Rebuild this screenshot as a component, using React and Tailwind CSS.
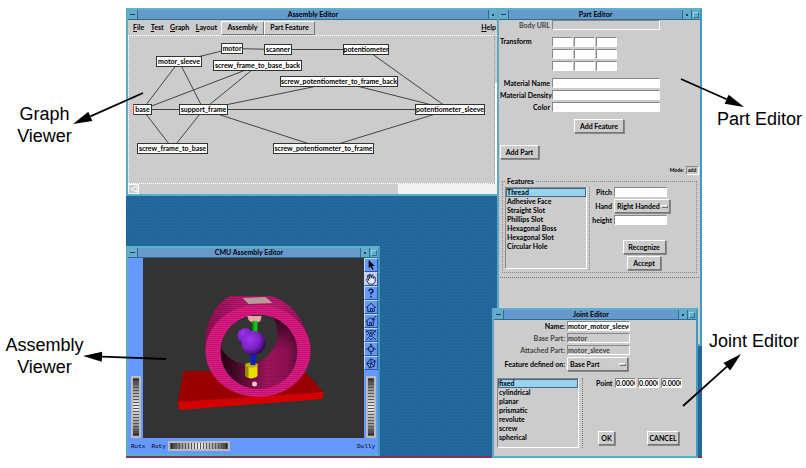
import React, { useState } from "react";
import clsx from "clsx";

const nodes = {
  motor: { x: 221, y: 43, w: 22 },
  scanner: { x: 264, y: 44, w: 28 },
  potentiometer: { x: 343, y: 44, w: 46 },
  motor_sleeve: { x: 156, y: 56, w: 46 },
  screw_frame_to_base_back: { x: 213, y: 60, w: 89 },
  screw_potentiometer_to_frame_back: { x: 280, y: 76, w: 118 },
  base: { x: 133, y: 104, w: 19 },
  support_frame: { x: 179, y: 104, w: 49 },
  potentiometer_sleeve: { x: 415, y: 104, w: 70 },
  screw_frame_to_base: { x: 137, y: 143, w: 71 },
  screw_potentiometer_to_frame: { x: 273, y: 143, w: 101 },
};

const edges = [
  ["motor_sleeve", "motor"],
  ["motor", "scanner"],
  ["scanner", "potentiometer"],
  ["potentiometer", "potentiometer_sleeve"],
  ["motor_sleeve", "base"],
  ["motor_sleeve", "support_frame"],
  ["screw_frame_to_base_back", "base"],
  ["screw_frame_to_base_back", "support_frame"],
  ["screw_potentiometer_to_frame_back", "support_frame"],
  ["screw_potentiometer_to_frame_back", "potentiometer_sleeve"],
  ["base", "support_frame"],
  ["support_frame", "potentiometer_sleeve"],
  ["base", "screw_frame_to_base"],
  ["support_frame", "screw_frame_to_base"],
  ["support_frame", "screw_potentiometer_to_frame"],
  ["potentiometer_sleeve", "screw_potentiometer_to_frame"],
];

// the graph canvas starts here in desktop coordinates
const ORIGIN = { x: 129, y: 36 };

const raised = "border border-t-white border-l-white border-b-[#777] border-r-[#777] bg-[#cccccc]";
const sunken = "border border-t-[#888] border-l-[#888] border-b-white border-r-white";

const Window = ({ title, className, children, maximize = true }) => (
  <section
    className={clsx(
      "absolute flex flex-col border-2 border-t-[#5fb0c8] border-l-[#5fa8c4] border-r-[#3f9cc0] border-b-[#4fb4c8] bg-[#cccccc]",
      className
    )}
  >
    <header className="flex h-[10px] shrink-0 items-stretch border-b border-[#2b6f8f] bg-[#6699cc]">
      <button aria-label="Window menu" className="flex w-[10px] items-center justify-center border-r border-[#2b6f8f] bg-[#66aacc]">
        <span className="h-px w-[5px] bg-[#114466]" />
      </button>
      <h2 className="flex-1 text-center font-bold leading-[9px]">{title}</h2>
      <button aria-label="Minimize" className="flex w-[9px] items-center justify-center border-l border-[#2b6f8f] bg-[#66aacc]">
        <span className="size-[2px] bg-[#114466]" />
      </button>
      {maximize && (
        <button aria-label="Maximize" className="flex w-[9px] items-center justify-center border-l border-[#2b6f8f] bg-[#66aacc]">
          <span className="size-[6px] border border-t-[#8fd8e4] border-l-[#8fd8e4] border-b-[#2b6f8f] border-r-[#2b6f8f]" />
        </button>
      )}
    </header>
    {children}
  </section>
);

const Button = ({ className, children }) => (
  <button className={clsx("h-[14px] font-bold leading-[10px] shadow-[1px_1px_0_#888]", raised, className)}>{children}</button>
);

const Field = ({ id, label, labelClass, inputClass, value = "", disabled }) => (
  <div className="flex items-center gap-[2px]">
    <label htmlFor={id} className={clsx("shrink-0 text-right", disabled && "text-[#444]", labelClass)}>
      {label}
    </label>
    <input
      id={id}
      defaultValue={value}
      readOnly={disabled}
      className={clsx("h-[10px] min-w-0 font-bold outline-none", sunken, disabled ? "bg-[#cccccc] text-[#444]" : "bg-white", inputClass)}
    />
  </div>
);

const Dropdown = ({ id, label, labelClass, selectClass, options }) => (
  <div className="flex items-center gap-[2px]">
    <label htmlFor={id} className={clsx("shrink-0 text-right", labelClass)}>
      {label}
    </label>
    <div className="relative">
      <select id={id} className={clsx("block h-[14px] appearance-none pl-[2px] font-bold outline-none shadow-[1px_1px_0_#888]", raised, selectClass)}>
        {options.map((o) => (
          <option key={o}>{o}</option>
        ))}
      </select>
      <span className="pointer-events-none absolute right-[2px] top-[6px] h-[3px] w-[7px] border border-t-white border-l-white border-b-[#777] border-r-[#777]" />
    </div>
  </div>
);

const ListBox = ({ label, items, className }) => {
  const [selected, setSelected] = useState(items[0]);
  return (
    <ul role="listbox" aria-label={label} className={clsx("flex flex-col", sunken, className)}>
      {items.map((item) => (
        <li key={item} role="option" aria-selected={item === selected}>
          <button
            onClick={() => setSelected(item)}
            className={clsx("block h-[9px] w-full px-px text-left leading-[9px]", item === selected && "bg-[#99d4ee] outline outline-[#446688] -outline-offset-1")}
          >
            {item}
          </button>
        </li>
      ))}
    </ul>
  );
};

const center = (name) => {
  const n = nodes[name];
  return [n.x - ORIGIN.x + n.w / 2, n.y - ORIGIN.y + 5.5];
};

const GraphWindow = () => (
  <Window title="Assembly Editor" className="left-0 top-0 h-[188px] w-[373px]" maximize={false}>
    <nav className="flex h-[16px] items-center border-b border-dotted border-white pl-[5px] pr-px">
      <div className="flex flex-1 items-center">
        <div className="mr-[4px] flex w-[84px] justify-between">
          {["File", "Test", "Graph", "Layout"].map((m) => (
            <button key={m}>
              <span className="underline">{m[0]}</span>
              {m.slice(1)}
            </button>
          ))}
        </div>
        <button className={clsx("h-[14px] w-[43px] font-bold", raised)}>Assembly</button>
        <button className={clsx("h-[14px] w-[51px] font-bold", raised)}>Part Feature</button>
      </div>
      <button>
        <span className="underline">H</span>elp
      </button>
    </nav>
    <div className="flex flex-1">
      <div className="relative flex-1 border-b border-l border-dotted border-white">
        <svg className="absolute inset-0 size-full" stroke="#444" strokeWidth="1">
          {edges.map(([a, b]) => {
            const [x1, y1] = center(a);
            const [x2, y2] = center(b);
            return <line key={a + b} x1={x1} y1={y1} x2={x2} y2={y2} />;
          })}
        </svg>
        {Object.entries(nodes).map(([name, n]) => (
          <div
            key={name}
            className={clsx(
              "absolute flex h-[11px] items-center justify-center border bg-white leading-[9px]",
              name === "base" ? "border-[#333] border-l-red-500" : "border-[#333]"
            )}
            style={{ left: n.x - ORIGIN.x, top: n.y - ORIGIN.y, width: n.w }}
          >
            {name}
          </div>
        ))}
      </div>
      <div className="flex w-[3px] flex-col border-l border-dotted border-[#998]">
        <div className="mt-[47px] flex-1 bg-white" />
      </div>
    </div>
    <div className="flex h-[10px] items-stretch justify-between">
      <button aria-label="Scroll left" className="flex w-[11px] items-center justify-center border border-white">
        <svg viewBox="0 0 8 8" className="size-[8px]" fill="none" stroke="#fff">
          <path d="M7 1 1 4l6 3z" />
        </svg>
      </button>
      <div className="w-[99px] bg-[#f2f2f2]" />
    </div>
  </Window>
);

const PartWindow = () => (
  <Window title="Part Editor" className="left-[371px] top-0 h-[338px] w-[205px]">
    <div className="flex flex-1 flex-col px-px">
      <Field id="url" label="Body URL" labelClass="w-[50px]" inputClass="w-[108px]" disabled />
      <div role="group" aria-label="Transform" className="mt-[7px] flex gap-[2px]">
        <span className="w-[50px]">Transform</span>
        <div className="grid grid-cols-[21px_21px_21px] gap-x-px gap-y-[2px]">
          {Array.from({ length: 9 }, (_, i) => (
            <input key={i} aria-label={`Transform ${i + 1}`} className={clsx("h-[10px] w-full bg-white", sunken)} />
          ))}
        </div>
      </div>
      <div className="mt-[7px] flex flex-col gap-[2px]">
        <Field id="mname" label="Material Name" labelClass="w-[50px]" inputClass="w-[108px]" />
        <Field id="mdens" label="Material Density" labelClass="w-[50px]" inputClass="w-[108px]" />
        <Field id="color" label="Color" labelClass="w-[50px]" inputClass="w-[108px]" />
      </div>
      <Button className="ml-[74px] mt-[7px] w-[50px]">Add Feature</Button>
      <Button className="mt-[12px] w-[39px]">Add Part</Button>
      <div className="mt-[7px] flex items-center justify-end gap-[2px] text-[5px]">
        <label htmlFor="mode">Mode:</label>
        <input id="mode" defaultValue="add" className={clsx("h-[9px] w-[13px] px-px font-bold", sunken)} />
      </div>
      <fieldset className="mx-[2px] mt-[2px] flex border border-dotted border-[#888] px-[2px] pb-[2px] pt-[2px]">
        <legend className="ml-px px-px leading-[8px]">Features</legend>
        <ListBox
          label="Features"
          items={["Thread", "Adhesive Face", "Straight Slot", "Phillips Slot", "Hexagonal Boss", "Hexagonal Slot", "Circular Hole"]}
          className="h-[82px] w-[82px]"
        />
        <div className="ml-[2px] w-[3px] border-l border-dotted border-[#888]" />
        <div className="flex flex-1 flex-col gap-[2px]">
          <Field id="pitch" label="Pitch" labelClass="w-[20px]" inputClass="w-[53px]" />
          <Dropdown id="hand" label="Hand" labelClass="w-[20px]" selectClass="w-[56px]" options={["Right Handed", "Left Handed"]} />
          <Field id="height" label="height" labelClass="w-[20px]" inputClass="w-[53px]" />
          <div className="mt-[13px] flex flex-col items-center gap-[2px] pl-[2px]">
            <Button className="w-[43px]">Recognize</Button>
            <Button className="w-[34px]">Accept</Button>
          </div>
        </div>
      </fieldset>
      <div className="mt-[4px] border-t border-dotted border-[#777]" />
    </div>
  </Window>
);

const JointWindow = () => (
  <Window title="Joint Editor" className="left-[366px] top-[300px] h-[150px] w-[206px]">
    <div className="flex flex-1 flex-col px-[3px] pt-px">
      <div className="flex flex-col gap-[2px]">
        <Field id="name" label="Name:" labelClass="w-[68px]" inputClass="w-[63px]" value="motor_motor_sleeve" />
        <Field id="bpart" label="Base Part:" labelClass="w-[68px]" inputClass="w-[63px]" value="motor" disabled />
        <Field id="apart" label="Attached Part:" labelClass="w-[68px]" inputClass="w-[63px]" value="motor_sleeve" disabled />
        <Dropdown id="defined" label="Feature defined on:" labelClass="w-[68px]" selectClass="w-[61px]" options={["Base Part", "Attached Part"]} />
      </div>
      <div className="mt-[7px] flex">
        <ListBox label="Joint type" items={["fixed", "cylindrical", "planar", "prismatic", "revolute", "screw", "spherical"]} className="h-[70px] w-[82px]" />
        <div className="ml-[3px] w-[14px] border-l border-dotted border-[#777]" />
        <div className="flex flex-1 flex-col justify-between pb-[3px]">
          <div className="flex items-center gap-[2px]">
            <span className="w-[17px]">Point</span>
            {["x", "y", "z"].map((axis) => (
              <input key={axis} aria-label={`Point ${axis}`} defaultValue="0.0000" className={clsx("h-[10px] w-[21px] bg-white font-bold", sunken)} />
            ))}
          </div>
          <div className="flex gap-[32px] pl-[2px]">
            <Button className="w-[17px]">OK</Button>
            <Button className="w-[32px]">CANCEL</Button>
          </div>
        </div>
      </div>
    </div>
  </Window>
);

const Wheel = ({ vertical, label, className }) => (
  <button aria-label={label} className={clsx("border-2 border-[#bbb] bg-[#444]", className)}>
    <span
      className={clsx(
        "block size-full",
        vertical
          ? "bg-[repeating-linear-gradient(to_bottom,#555_0_1px,transparent_1px_3px),linear-gradient(to_bottom,#222,#999_20%,#eee_50%,#999_80%,#222)]"
          : "bg-[repeating-linear-gradient(to_right,#555_0_1px,transparent_1px_3px),linear-gradient(to_right,#222,#999_20%,#eee_50%,#999_80%,#222)]"
      )}
    />
  </button>
);

const tools = [
  { name: "Select", d: <path d="M4 1v9l2-2 2 4 1.500-1-2-3.500h3z" fill="#000" stroke="none" /> },
  { name: "Hand", d: <path d="M4 12 1.500 7l1-1L4 8 2.500 3l1-1L5 6 4.500 2l1-1L7 5.500 7.500 2l1 0 .5 4 1-2 1 .5v5L9 12z" fill="#eef" /> },
  { name: "Help", d: <path d="M4.500 4.500V3.500L5.500 2.500h2l1 1v1.500L6.500 6.500V8M6.500 9.500v2" strokeWidth="1.700" /> },
  { name: "Home", d: <path d="M1.500 7 6.500 2.500 11.500 7H10v4.500H3V7zM6 11V8h2v3" /> },
  { name: "Set home", d: <path d="M1 7 5.500 3l4.500 4H9v4.500H2.500V7zM5 11V8h2v3M12 1 8.500 5M8.500 2.500V5H11" /> },
  { name: "View all", d: <path d="M1 3.500C4 1 9 1 12 3.500M2 6.500 5 4h3l3 2.500M5 6.500a1.500 1.500 0 1 0 3 0 1.500 1.500 0 1 0-3 0M5 8l-4 4M8 8l4 4M4.500 11h4M1 1l3 3M12 1 9 4" /> },
  { name: "Seek", d: <path d="M3.500 6.500a3 3 0 1 0 6 0 3 3 0 1 0-6 0M6.500 1v4M6.500 8v4M1 6.500h4M8 6.500h4M5.500 2l1-1 1 1M5.500 11l1 1 1-1" /> },
  { name: "Perspective", d: <path d="M2 7 6 2l5 2-1 6-5 2zM2 7l5 0 3 3M7 7l4-3M5 12l2-5M6 2l1 5" /> },
];

const Scene = () => (
  <svg viewBox="143 258 222 180" preserveAspectRatio="xMidYMid slice" className="block min-w-0 flex-1 bg-[#333333]">
    <defs>
      <pattern id="dots" width="2" height="2" patternUnits="userSpaceOnUse">
        <rect width="1" height="1" fill="#a01068" />
      </pattern>
      <pattern id="dark" width="2" height="2" patternUnits="userSpaceOnUse">
        <rect width="1" height="1" fill="#600838" />
      </pattern>
      <linearGradient id="wall" x1="0" y1="0" x2="1" y2="0">
        <stop offset="0" stopColor="#150008" />
        <stop offset=".25" stopColor="#4c0a2e" />
        <stop offset=".6" stopColor="#a3145f" />
        <stop offset=".85" stopColor="#8c1052" />
        <stop offset="1" stopColor="#5c0a38" />
      </linearGradient>
      <linearGradient id="shade" x1="0" y1="0" x2="0" y2="1">
        <stop offset="0" stopColor="#100008" stopOpacity=".9" />
        <stop offset=".45" stopColor="#100008" stopOpacity="0" />
      </linearGradient>
      <linearGradient id="flank" x1="0" y1="0" x2="1" y2="0">
        <stop offset="0" stopColor="#8a1050" />
        <stop offset=".3" stopColor="#b8186c" />
        <stop offset=".7" stopColor="#c01a72" />
        <stop offset="1" stopColor="#8a1050" />
      </linearGradient>
      <radialGradient id="ball" cx=".35" cy=".35" r=".7">
        <stop offset="0" stopColor="#a033f0" />
        <stop offset=".6" stopColor="#7a22c0" />
        <stop offset="1" stopColor="#2c0850" />
      </radialGradient>
      <clipPath id="hole">
        <ellipse cx="259.500" cy="352" rx="38.500" ry="37" />
      </clipPath>
    </defs>
    <path d="M184 371H305L324 392 178 402z" fill="#990000" />
    <path d="M178 402 324 392 323 399 180 410z" fill="#d40000" />
    <path d="M206 351C204 330 211 306 231 296L271 296C290 301 305 318 311 345L258 352z" fill="url(#flank)" />
    <path d="M206 351C204 330 211 306 231 296L271 296C290 301 305 318 311 345L258 352z" fill="url(#dark)" opacity=".6" />
    <path d="M243 298 266 297 273 303 249 304z" fill="#b59a98" />
    <ellipse cx="258.500" cy="351" rx="52.500" ry="46" fill="#dc1a80" />
    <ellipse cx="258.500" cy="351" rx="52.500" ry="46" fill="url(#dots)" />
    <g clipPath="url(#hole)">
      <rect x="220" y="314" width="80" height="78" fill="url(#wall)" />
      <rect x="220" y="314" width="80" height="78" fill="url(#shade)" />
      <rect x="220" y="314" width="80" height="78" fill="url(#dark)" opacity=".5" />
      <ellipse cx="248" cy="333" rx="30" ry="31" fill="#333333" />
    </g>
    <path d="M248 316h14l-1 5-4 2h-4l-4-3z" fill="#e4a8a4" />
    <path d="M253 321h5v13h-5z" fill="#00c814" />
    <path d="M253 321h1v13h-1z" fill="#006c08" />
    <circle cx="246" cy="336" r="8" fill="url(#ball)" />
    <circle cx="254" cy="343" r="12" fill="url(#ball)" />
    <path d="M251 355h6l-1 11h-4z" fill="#1020c0" />
    <path d="M246 365v11q6 5 12 0V365z" fill="#e8dc00" />
    <path d="M246 365v11q2 2 3 2V365z" fill="#908800" />
    <ellipse cx="252" cy="365" rx="6.500" ry="2.500" fill="#b8ac00" />
    <path d="M251 359h5v6h-5z" fill="#1020c0" />
    <circle cx="255" cy="384" r="2.500" fill="#f0c8d0" />
  </svg>
);

const ViewerWindow = () => (
  <Window title="CMU Assembly Editor" className="left-0 top-[238px] h-[210px] w-[254px]">
    <div className="flex flex-1 flex-col bg-[#6699ff]">
      <div className="flex h-[180px]">
        <div className="flex w-[15px] flex-col items-center justify-end">
          <Wheel vertical label="Rotate X" className="h-[62px] w-[10px]" />
        </div>
        <Scene />
        <div className="flex w-[14px] flex-col items-center justify-between">
          <div className="flex w-full flex-col">
            {tools.map((t) => (
              <button
                key={t.name}
                aria-label={t.name}
                className={clsx(
                  "flex h-[14px] items-center justify-center border border-t-[#b8d8ff] border-l-[#b8d8ff] border-b-[#335599] border-r-[#335599]",
                  t.name === "Hand" ? "bg-[#ccccff]" : "bg-[#6699ff]"
                )}
              >
                <svg viewBox="0 0 13 13" className="size-[12px]" fill="none" stroke="#112244" strokeWidth="1">
                  {t.d}
                </svg>
              </button>
            ))}
          </div>
          <Wheel vertical label="Dolly" className="h-[62px] w-[10px]" />
        </div>
      </div>
      <div className="flex flex-1 items-center px-[3px] font-['Liberation_Mono',monospace] text-[6px] font-normal">
        <span>Rotx</span>
        <span className="ml-[6px]">Roty</span>
        <Wheel label="Rotate Y" className="ml-[2px] h-[10px] w-[62px]" />
        <span className="ml-auto">Dolly</span>
      </div>
    </div>
  </Window>
);

// from: tail of the arrow, to: tip of its head
const arrows = [
  { from: [143, 93], to: [73, 124] },
  { from: [166, 359], to: [83, 356] },
  { from: [681, 79], to: [744, 107] },
  { from: [683, 406], to: [741, 354] },
];

const Arrows = () => (
  <svg className="pointer-events-none absolute left-0 top-0" width="806" height="468" viewBox="0 0 806 468">
    {arrows.map(({ from: [x1, y1], to: [x2, y2] }) => {
      const len = Math.hypot(x2 - x1, y2 - y1);
      const ux = (x2 - x1) / len;
      const uy = (y2 - y1) / len;
      const bx = x2 - ux * 19;
      const by = y2 - uy * 19;
      return (
        <g key={x1}>
          <line x1={x1} y1={y1} x2={bx} y2={by} stroke="#000" strokeWidth="1.800" />
          <polygon points={`${x2},${y2} ${bx - uy * 5},${by + ux * 5} ${bx + uy * 5},${by - ux * 5}`} />
        </g>
      );
    })}
  </svg>
);

const App = () => {
  return (
    <main className="relative flex min-h-screen bg-white pt-2 font-['Liberation_Sans',Arial,sans-serif] text-[18px] leading-[22px] text-black">
      <aside className="flex w-[126px] shrink-0 flex-col gap-[187px] pr-[37px] pt-[95px] text-center">
        <p>
          Graph
          <br />
          Viewer
        </p>
        <p>
          Assembly
          <br />
          Viewer
        </p>
      </aside>
      <div className="relative h-[450px] min-w-[576px] flex-1 whitespace-nowrap border-b-2 border-b-[#883355] bg-[#226699] bg-[radial-gradient(#2b6fa3_1px,transparent_1px)] bg-[length:3px_3px] font-[Lato,'Liberation_Sans',sans-serif] text-[7px] font-bold leading-[9px]">
        <GraphWindow />
        <PartWindow />
        <ViewerWindow />
        <JointWindow />
      </div>
      <aside className="flex w-[104px] shrink-0 flex-col gap-[200px] whitespace-nowrap pt-[100px]">
        <p className="pl-[15px]">Part Editor</p>
        <p className="pl-[7px]">Joint Editor</p>
      </aside>
      <Arrows />
    </main>
  );
};

export default App;
